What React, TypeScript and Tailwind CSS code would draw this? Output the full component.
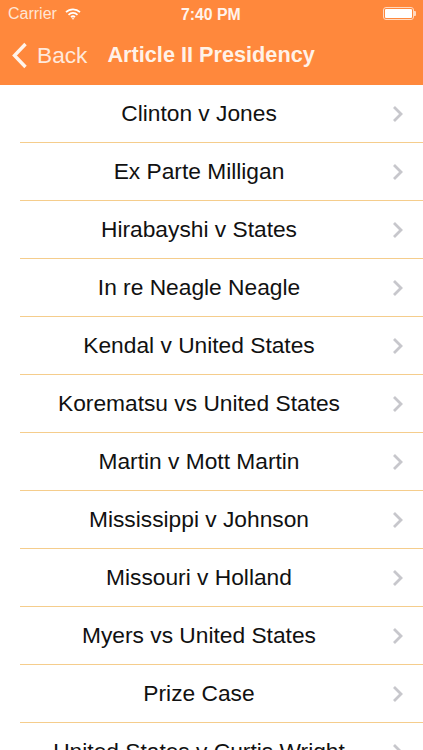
const cases = [
  'Clinton v Jones',
  'Ex Parte Milligan',
  'Hirabayshi v States',
  'In re Neagle Neagle',
  'Kendal v United States',
  'Korematsu vs United States',
  'Martin v Mott Martin',
  'Mississippi v Johnson',
  'Missouri v Holland',
  'Myers vs United States',
  'Prize Case',
  'United States v Curtis Wright',
];

function Chevron() {
  return (
    <svg width="12" height="18" viewBox="0 0 12 18" className="shrink-0 ml-[14px]" fill="none">
      <path d="M2 2l7 7-7 7" stroke="#c7c7cc" strokeWidth="2.8" />
    </svg>
  );
}

export default function App() {
  return (
    <div className="w-[423px] h-[750px] overflow-hidden bg-white font-['Liberation_Sans',Arial,sans-serif]">
      <header className="h-[85px] bg-[#ff883c] text-white">
        <div className="h-[27px] flex items-center justify-between pl-[8px] pr-[7px] text-[16px] relative">
          <div className="flex items-center gap-[8px] text-[#ffe6d5]">
            <span>Carrier</span>
            <svg width="16" height="12" viewBox="0 0 16 12" fill="none" stroke="white" strokeWidth="1.7">
              <path d="M1 4.2a10 10 0 0 1 14 0" />
              <path d="M3.5 6.8a6.4 6.4 0 0 1 9 0" />
              <path d="M6 9.2a2.9 2.9 0 0 1 4 0" />
              <path d="M8 11.8l-1.4-1.6h2.8z" fill="white" stroke="none" />
            </svg>
          </div>
          <span className="absolute left-[181px] top-[3px] font-bold text-[15.8px] text-[#fff4ec]">7:40 PM</span>
          <div className="flex items-center">
            <div className="w-[31px] h-[13px] rounded-[3px] border border-[#ffd9c0] p-[1px]">
              <div className="w-full h-full rounded-[1px] bg-white" />
            </div>
            <div className="w-[2px] h-[5px] bg-[#ffd9c0] rounded-r-[1px]" />
          </div>
        </div>
        <div className="h-[57px] flex items-center pl-[11px]">
          <svg width="17" height="27" viewBox="0 0 17 27" fill="none" className="shrink-0">
            <path d="M14.5 2L3.5 13.5l11 11.5" stroke="#fff4ec" strokeWidth="3.4" />
          </svg>
          <span className="ml-[9px] text-[22.7px] text-[#ffe9db]">Back</span>
          <span className="ml-[20px] text-[21.7px] font-bold text-[#fff2e8]">Article II Presidency</span>
        </div>
      </header>
      <ul>
        {cases.map((name) => (
          <li key={name} className="h-[58px] ml-[20px] flex items-center border-b border-[#f5cd8c] box-border">
            <span className="w-[358px] pb-[1px] text-center text-[22.75px] leading-none text-[#111] whitespace-nowrap">{name}</span>
            <Chevron />
          </li>
        ))}
      </ul>
    </div>
  );
}
